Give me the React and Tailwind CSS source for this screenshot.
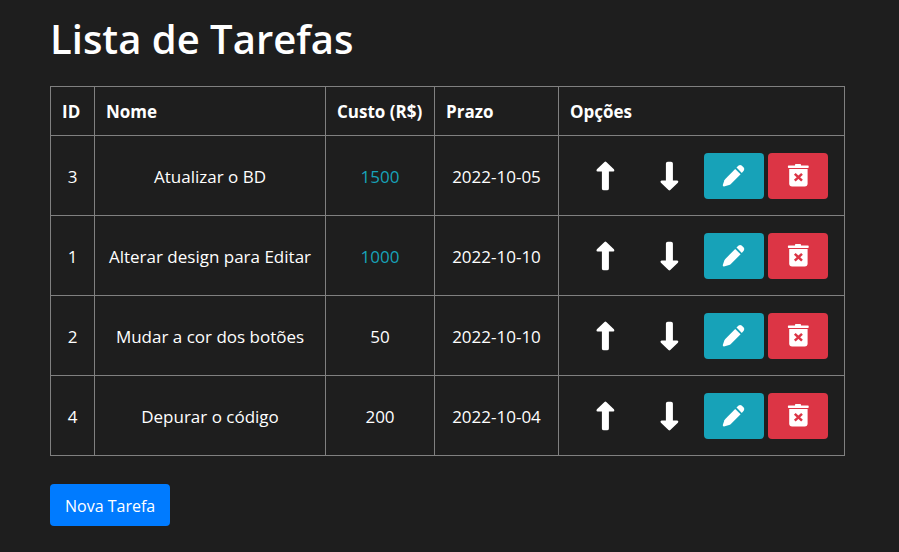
const tasks = [
  { id: 3, name: "Atualizar o BD", cost: 1500, due: "2022-10-05" },
  { id: 1, name: "Alterar design para Editar", cost: 1000, due: "2022-10-10" },
  { id: 2, name: "Mudar a cor dos botões", cost: 50, due: "2022-10-10" },
  { id: 4, name: "Depurar o código", cost: 200, due: "2022-10-04" },
];

function ArrowIcon({ down = false }) {
  return (
    <svg viewBox="0 0 20 30" className="h-[30px] w-5" fill="#fff" aria-hidden="true">
      <path
        transform={down ? "matrix(1 0 0 -1 -.6 30)" : "translate(-.6 0)"}
        d="M9.1.9Q10 .2 10.9.9L18.5 8.3Q19.6 10.2 17.8 10.6H13.5V27.4Q13.5 29.3 11.6 29.3H8.4Q6.5 29.3 6.5 27.4V10.6H2.2Q.4 10.2 1.5 8.3Z"
      />
    </svg>
  );
}

function PencilIcon() {
  return (
    <svg viewBox="0 0 24 24" className="size-6" fill="#fff" aria-hidden="true">
      <path d="M13.2 5 18.6 10.3 8.6 20.2Q7.9 20.8 7.1 21.1L2 22.4Q.6 22.5 .8 21.1L2.4 16.2Q2.7 15.5 3.3 14.9Z" />
      <path d="M14.5 3.6 16.6 1.6Q18.1.3 19.6 1.5L21.7 3.6Q22.9 5.2 21.7 6.8L19.8 8.9Z" />
    </svg>
  );
}

function TrashIcon() {
  return (
    <svg viewBox="0 0 24 24" className="size-6" fill="#fff" aria-hidden="true">
      <path d="M9 .8Q9 0 9.8 0H14.2Q15 0 15 .8V1.6H22Q22.7 1.6 22.7 2.3V3.2Q22.7 3.9 22 3.9H2.6Q1.9 3.9 1.9 3.2V2.3Q1.9 1.6 2.6 1.6H9Z" />
      <path d="M3.2 4.9H21.6V19.6Q21.6 22.5 18.7 22.5H6.1Q3.2 22.5 3.2 19.6Z" />
      <path d="m8.8 9.8 7.2 6.8m0-6.8-7.2 6.8" stroke="#dc3545" strokeWidth="2.5" />
    </svg>
  );
}

const button = "flex h-[46px] w-[60px] items-center justify-center rounded";

export default function App() {
  return (
    <main className="min-h-screen bg-[#1e1e1e] pt-[11px] pr-[54px] pb-6 pl-[50px] font-['Open_Sans','Noto_Sans',sans-serif] text-[17px] leading-6 text-white">
      <h1 className="mb-[19px] text-[40px] leading-14 font-semibold">Lista de Tarefas</h1>
      <table className="w-full table-fixed border-collapse [&_td]:border [&_td]:border-[#808080] [&_th]:border [&_th]:border-[#808080]">
        <colgroup>
          <col className="w-11" />
          <col />
          <col className="w-[109px]" />
          <col className="w-[124px]" />
          <col className="w-[286px]" />
        </colgroup>
        <thead>
          <tr className="h-[49px] text-left whitespace-nowrap [&>th]:px-[11px] [&>th]:pt-0.5">
            <th>ID</th>
            <th>Nome</th>
            <th>Custo (R$)</th>
            <th>Prazo</th>
            <th>Opções</th>
          </tr>
        </thead>
        <tbody>
          {tasks.map((task) => (
            <tr key={task.id} className="h-20 text-center whitespace-nowrap [&>td]:pt-0.5 [&>td:last-child]:pt-0">
              <td>{task.id}</td>
              <td>{task.name}</td>
              <td className={task.cost >= 1000 ? "text-[#17a2b8]" : ""}>{task.cost}</td>
              <td>{task.due}</td>
              <td>
                <div className="flex justify-center gap-1">
                  <button type="button" aria-label="Mover para cima" className={button}><ArrowIcon /></button>
                  <button type="button" aria-label="Mover para baixo" className={button}><ArrowIcon down /></button>
                  <button type="button" aria-label="Editar" className={`${button} bg-[#17a2b8]`}><PencilIcon /></button>
                  <button type="button" aria-label="Excluir" className={`${button} bg-[#dc3545]`}><TrashIcon /></button>
                </div>
              </td>
            </tr>
          ))}
        </tbody>
      </table>
      <button type="button" className="mt-7 h-[42px] rounded bg-[#007bff] px-[15px] pt-0.5 text-base">Nova Tarefa</button>
    </main>
  );
}
